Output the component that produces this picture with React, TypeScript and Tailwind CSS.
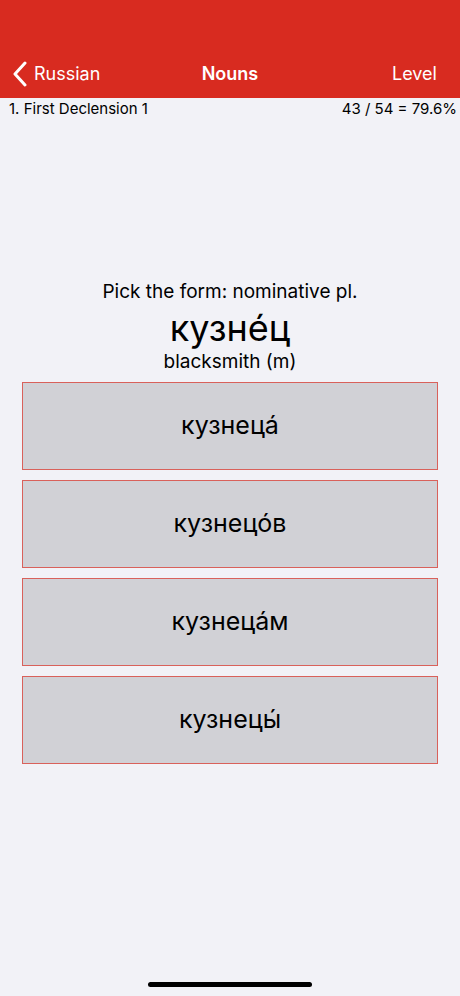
const choices = ["кузнеца́", "кузнецо́в", "кузнеца́м", "кузнецы́"];

function BackChevron() {
  return (
    <svg width="16" height="26" viewBox="0 0 16 26" fill="none" className="shrink-0">
      <path
        d="M13 2 L3 13 L13 24"
        stroke="white"
        strokeWidth="3"
        strokeLinecap="round"
        strokeLinejoin="round"
      />
    </svg>
  );
}

export default function App() {
  return (
    <div
      className="relative flex h-[996px] w-[460px] flex-col bg-[#f2f2f7] text-black"
      style={{ fontFamily: "Inter, 'Liberation Sans', sans-serif" }}
    >
      {/* Nav bar */}
      <header className="flex h-[98px] items-end bg-[#d82b20] pb-[11px] text-white">
        <div className="grid w-full grid-cols-3 items-center px-[12px]">
          <div className="flex items-center gap-[6px]">
            <BackChevron />
            <span className="text-[18px]">Russian</span>
          </div>
          <div className="text-center text-[18px] font-semibold">Nouns</div>
          <div className="pr-[11px] text-right text-[18px]">Level</div>
        </div>
      </header>

      {/* Progress row */}
      <div className="flex h-[22px] items-center justify-between pl-[9px] pr-[3px] text-[15px]">
        <span>1. First Declension 1</span>
        <span>43 / 54 = 79.6%</span>
      </div>

      {/* Question */}
      <div className="mt-[160px] flex flex-col items-center">
        <p className="h-[24px] text-[19px] leading-[24px]">Pick the form: nominative pl.</p>
        <p className="mt-[2px] h-[44px] text-[36px] leading-[44px]">кузне́ц</p>
        <p className="h-[24px] text-[19px] leading-[24px]">blacksmith (m)</p>
      </div>

      {/* Choices */}
      <div className="mt-[8px] flex flex-col gap-[10px] px-[22px]">
        {choices.map((c) => (
          <button
            key={c}
            className="flex h-[88px] items-center justify-center border border-[#d9615b] bg-[#d1d1d6] text-[25px]"
          >
            {c}
          </button>
        ))}
      </div>

      {/* Home indicator */}
      <div className="absolute bottom-[9px] left-1/2 h-[5px] w-[164px] -translate-x-1/2 rounded-full bg-black" />
    </div>
  );
}
